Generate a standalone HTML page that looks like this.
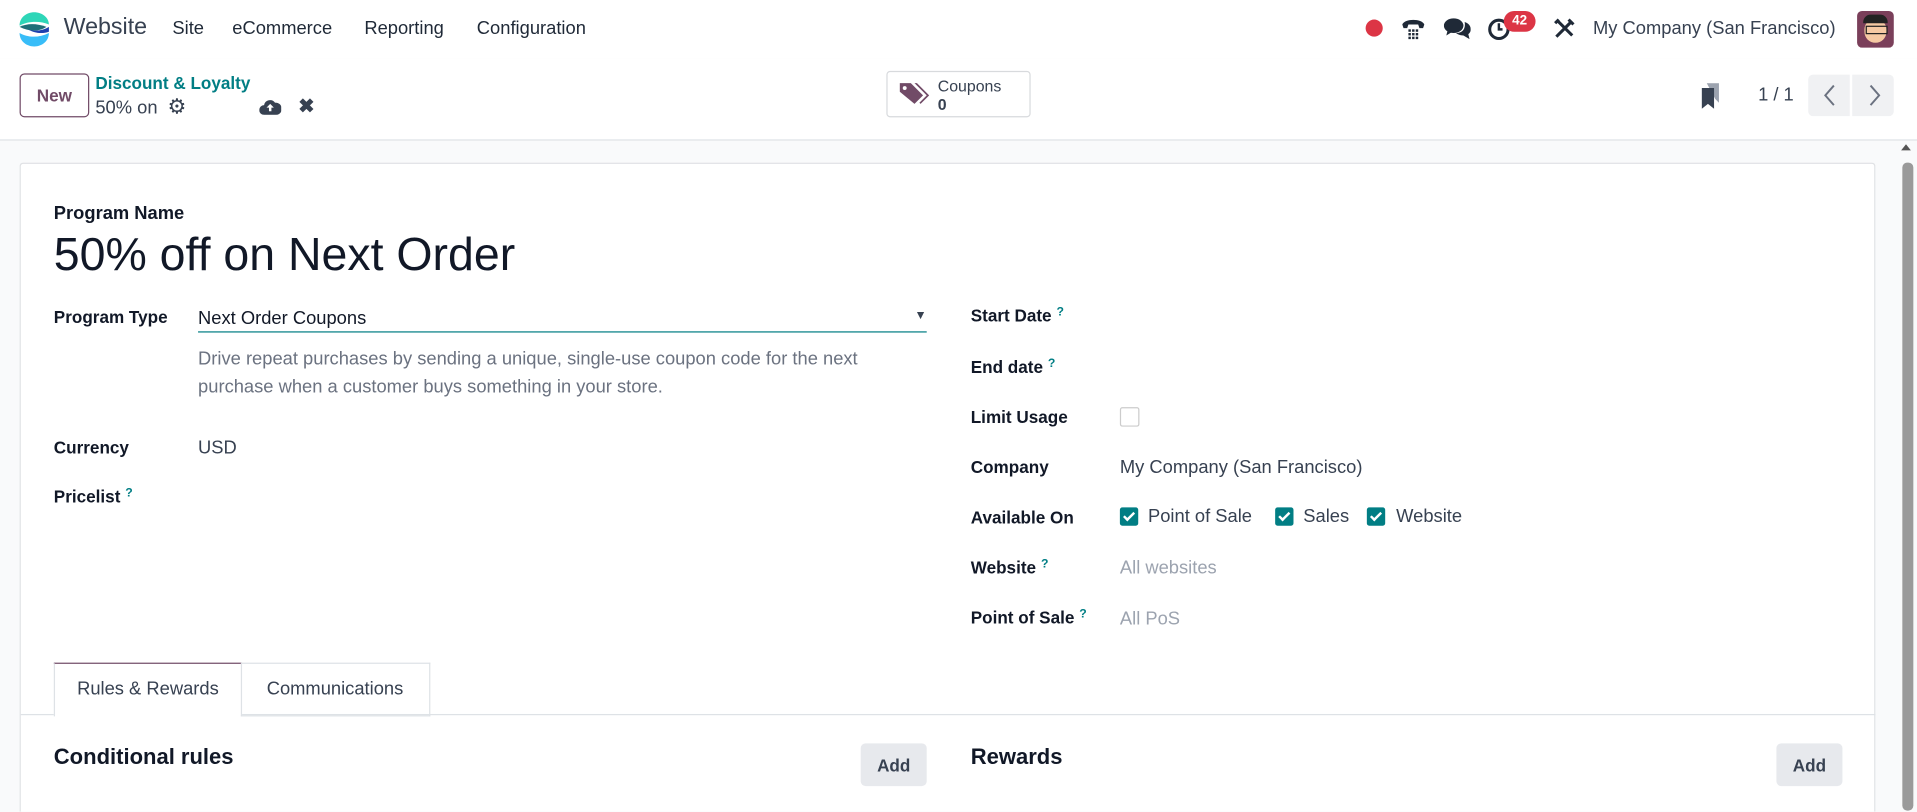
<!DOCTYPE html>
<html><head><meta charset="utf-8"><style>
html,body{margin:0;padding:0;width:1917px;height:812px;overflow:hidden;background:#f9fafb}
#s{position:absolute;left:0;top:0;width:1568px;height:664px;overflow:hidden;transform:scale(1.22258);transform-origin:0 0;font-family:"Liberation Sans",sans-serif;color:#1f2937;font-size:14px}
.a{position:absolute;white-space:nowrap}
.lbl{font-weight:bold;font-size:14px;color:#111827}
.q{color:#017e84;font-size:10px;vertical-align:top;margin-left:4px;font-weight:bold}
.cb{position:absolute;width:15px;height:15px;background:#017e84;border-radius:2px}
.cb:after{content:"";position:absolute;left:5px;top:2px;width:3px;height:7px;border:solid #fff;border-width:0 2px 2px 0;transform:rotate(45deg)}
.btn{position:absolute;background:#e7e9ed;border-radius:4px;font-weight:bold;color:#374151;font-size:14px;text-align:center}
</style></head><body><div id="s">
<div class="a" style="left:0;top:0;width:1568px;height:48px;background:#fff"></div>
<svg class="a" style="left:13px;top:9px" width="30" height="30" viewBox="0 0 30 30"><path d="M3 12C3 5 9 1 15 1s12 4 12 10C20 8 10 8 3 12z" fill="#2ed6b8"/><path d="M3 13c6-3 14-3 22 0-6 4-14 4-22 0z" fill="#1f6f78"/><path d="M3 18c7 4 16 4 24 0 0 7-6 11-12 11S3 25 3 18z" fill="#38bdf8"/><path d="M10 15c6 2 12 1 17-2v4c-6 2-12 1-17-2z" fill="#1e40af"/></svg>
<div class="a" style="left:52px;top:12px;font-size:19px;color:#374151">Website</div>
<div class="a" style="left:141px;top:15px;font-size:15px">Site</div>
<div class="a" style="left:190px;top:15px;font-size:15px">eCommerce</div>
<div class="a" style="left:298px;top:15px;font-size:15px">Reporting</div>
<div class="a" style="left:390px;top:15px;font-size:15px">Configuration</div>
<div class="a" style="left:1117px;top:16px;width:14px;height:14px;border-radius:50%;background:#dc3545"></div>
<svg class="a" style="left:1146px;top:13px" width="20" height="20" viewBox="0 0 20 20"><path d="M1 7c2-5 16-5 18 0l-1 3h-3l-1-3H6L5 10H2z" fill="#1f2937"/><g fill="#1f2937"><rect x="6" y="11" width="2" height="2"/><rect x="9" y="11" width="2" height="2"/><rect x="12" y="11" width="2" height="2"/><rect x="6" y="14" width="2" height="2"/><rect x="9" y="14" width="2" height="2"/><rect x="12" y="14" width="2" height="2"/><rect x="6" y="17" width="2" height="2"/><rect x="9" y="17" width="2" height="2"/><rect x="12" y="17" width="2" height="2"/></g></svg>
<svg class="a" style="left:1181px;top:13px" width="22" height="20" viewBox="0 0 22 20"><ellipse cx="8" cy="8" rx="8" ry="6" fill="#1f2937"/><path d="M3 12l-1 4 5-3z" fill="#1f2937"/><path d="M17 5c3 1 5 3 5 6 0 2-1 3-2 4l1 4-5-3c-3 0-5-1-6-2 5 0 8-3 7-9z" fill="#1f2937"/></svg>
<svg class="a" style="left:1217px;top:14px" width="20" height="20" viewBox="0 0 20 20"><circle cx="9" cy="10" r="7.5" fill="none" stroke="#1f2937" stroke-width="2.5"/><path d="M9 5v5h3" stroke="#1f2937" stroke-width="2" fill="none"/></svg>
<div class="a" style="left:1230px;top:9px;width:26px;height:17px;border-radius:9px;background:#dc3545;color:#fff;font-size:11px;font-weight:bold;text-align:center;line-height:17px">42</div>
<svg class="a" style="left:1270px;top:14px" width="19" height="19" viewBox="0 0 19 19"><path d="M3 16L15 4M13 2l4 4M4 3l12 12M2 5l3-3" stroke="#1f2937" stroke-width="2.5" fill="none"/></svg>
<div class="a" style="left:1303px;top:15px;font-size:15px;color:#374151">My Company (San Francisco)</div>
<div class="a" style="left:1519px;top:9px;width:30px;height:30px;border-radius:4px;background:#7a3f5a"><div style="position:absolute;left:6px;top:7px;width:18px;height:19px;background:#f5c9a3;border-radius:8px 8px 9px 9px"></div><div style="position:absolute;left:5px;top:3px;width:20px;height:7px;background:#222;border-radius:6px 6px 0 0"></div><div style="position:absolute;left:7px;top:12px;width:16px;height:5px;border:1.5px solid #222"></div></div>

<div class="a" style="left:0;top:48px;width:1568px;height:66px;background:#fff;border-bottom:1px solid #dee2e6"></div>
<div class="a" style="left:16px;top:60px;width:55px;height:34px;border:1px solid #714b67;border-radius:4px;text-align:center;line-height:34px;font-weight:bold;color:#714b67;font-size:14px">New</div>
<div class="a" style="left:78px;top:60px;font-size:14px;font-weight:bold;color:#017e84">Discount &amp; Loyalty</div>
<div class="a" style="left:78px;top:80px;font-size:15px;color:#374151">50% on</div>
<div class="a" style="left:137px;top:78px;font-size:17px;color:#374151">⚙</div>
<svg class="a" style="left:212px;top:80px" width="18" height="14" viewBox="0 0 18 14"><path d="M4 14A4 4 0 014 6 5 5 0 0113 4a4 4 0 011 10z" fill="#374151"/><path d="M9 5l-3 3h2v3h2V8h2z" fill="#fff"/></svg>
<div class="a" style="left:244px;top:77px;font-size:16px;font-weight:bold;color:#374151">✖</div>
<div class="a" style="left:725px;top:58px;width:116px;height:36px;border:1px solid #d8dadd;border-radius:3px;background:#fff"></div>
<svg class="a" style="left:735px;top:66px" width="28" height="20" viewBox="0 0 28 20"><path d="M1 2h9l10 10-7 7L1 9z" fill="#714b67"/><path d="M13 2h2l10 10-7 7-1-1 6-6z" fill="#714b67"/><circle cx="5" cy="6" r="1.6" fill="#fff"/></svg>
<div class="a" style="left:767px;top:63px;font-size:13px;color:#374151;line-height:15px">Coupons<br><b>0</b></div>
<svg class="a" style="left:1390px;top:68px" width="18" height="22" viewBox="0 0 18 22"><path d="M6 0h10v16l-3-3z" fill="#9ca3af"/><path d="M2 4h10v17l-5-4-5 4z" fill="#374151"/></svg>
<div class="a" style="left:1438px;top:69px;font-size:15px;color:#374151">1 / 1</div>
<div class="a" style="left:1479px;top:61px;width:34px;height:34px;background:#f0f1f3;border-radius:4px 0 0 4px"></div>
<div class="a" style="left:1515px;top:61px;width:34px;height:34px;background:#f0f1f3;border-radius:0 4px 4px 0"></div>
<svg class="a" style="left:1489px;top:68px" width="16" height="20" viewBox="0 0 16 20"><path d="M11 2L4 10l7 8" stroke="#6b7280" stroke-width="1.6" fill="none"/></svg>
<svg class="a" style="left:1525px;top:68px" width="16" height="20" viewBox="0 0 16 20"><path d="M5 2l7 8-7 8" stroke="#6b7280" stroke-width="1.6" fill="none"/></svg>

<div class="a" style="left:1555px;top:118px;width:0;height:0;border:4px solid transparent;border-bottom:5px solid #555;border-top:0"></div>
<div class="a" style="left:1556px;top:133px;width:9px;height:530px;background:#9a9a9a;border-radius:4px"></div>

<div class="a" style="left:16px;top:133px;width:1518px;height:531px;background:#fff;border:1px solid #dfe1e4;border-bottom:none;border-radius:3px 3px 0 0;box-sizing:border-box"></div>
<div class="a lbl" style="left:44px;top:166px;font-size:15px">Program Name</div>
<div class="a" style="left:44px;top:188px;font-size:38px;color:#111827">50% off on Next Order</div>
<div class="a lbl" style="left:44px;top:251px">Program Type</div>
<div class="a" style="left:162px;top:252px;font-size:15px;color:#111827">Next Order Coupons</div>
<div class="a" style="left:748px;top:253px;font-size:10px;color:#374151">▼</div>
<div class="a" style="left:162px;top:271px;width:596px;height:1px;background:#017e84"></div>
<div class="a" style="left:162px;top:282px;font-size:15px;color:#6b7280;line-height:23px">Drive repeat purchases by sending a unique, single-use coupon code for the next<br>purchase when a customer buys something in your store.</div>
<div class="a lbl" style="left:44px;top:358px">Currency</div>
<div class="a" style="left:162px;top:358px;font-size:15px;color:#374151">USD</div>
<div class="a lbl" style="left:44px;top:398px">Pricelist<span class="q">?</span></div>

<div class="a lbl" style="left:794px;top:250px">Start Date<span class="q">?</span></div>
<div class="a lbl" style="left:794px;top:292px">End date<span class="q">?</span></div>
<div class="a lbl" style="left:794px;top:333px">Limit Usage</div>
<div class="a" style="left:916px;top:333px;width:14px;height:14px;border:1px solid #ccc;border-radius:2px"></div>
<div class="a lbl" style="left:794px;top:374px">Company</div>
<div class="a" style="left:916px;top:374px;font-size:15px;color:#374151">My Company (San Francisco)</div>
<div class="a lbl" style="left:794px;top:415px">Available On</div>
<div class="cb" style="left:916px;top:415px"></div><div class="a" style="left:939px;top:414px;font-size:15px;color:#374151">Point of Sale</div>
<div class="cb" style="left:1043px;top:415px"></div><div class="a" style="left:1066px;top:414px;font-size:15px;color:#374151">Sales</div>
<div class="cb" style="left:1118px;top:415px"></div><div class="a" style="left:1142px;top:414px;font-size:15px;color:#374151">Website</div>
<div class="a lbl" style="left:794px;top:456px">Website<span class="q">?</span></div>
<div class="a" style="left:916px;top:456px;font-size:15px;color:#9ca3af">All websites</div>
<div class="a lbl" style="left:794px;top:497px">Point of Sale<span class="q">?</span></div>
<div class="a" style="left:916px;top:498px;font-size:15px;color:#9ca3af">All PoS</div>

<div class="a" style="left:17px;top:584px;width:1517px;height:1px;background:#dee2e6"></div>
<div class="a" style="left:44px;top:542px;width:152px;height:43px;border:1px solid #dee2e6;border-top:1px solid #714b67;border-bottom:none;background:#fff;text-align:center;line-height:42px;font-size:15px;color:#374151">Rules &amp; Rewards</div>
<div class="a" style="left:197px;top:542px;width:154px;height:42px;border:1px solid #dee2e6;border-left:none;text-align:center;line-height:42px;font-size:15px;color:#374151">Communications</div>
<div class="a" style="left:44px;top:609px;font-size:18px;font-weight:bold;color:#111827">Conditional rules</div>
<div class="btn" style="left:704px;top:608px;width:54px;height:35px;line-height:37px">Add</div>
<div class="a" style="left:794px;top:609px;font-size:18px;font-weight:bold;color:#111827">Rewards</div>
<div class="btn" style="left:1453px;top:608px;width:54px;height:35px;line-height:37px">Add</div>
</div></body></html>
